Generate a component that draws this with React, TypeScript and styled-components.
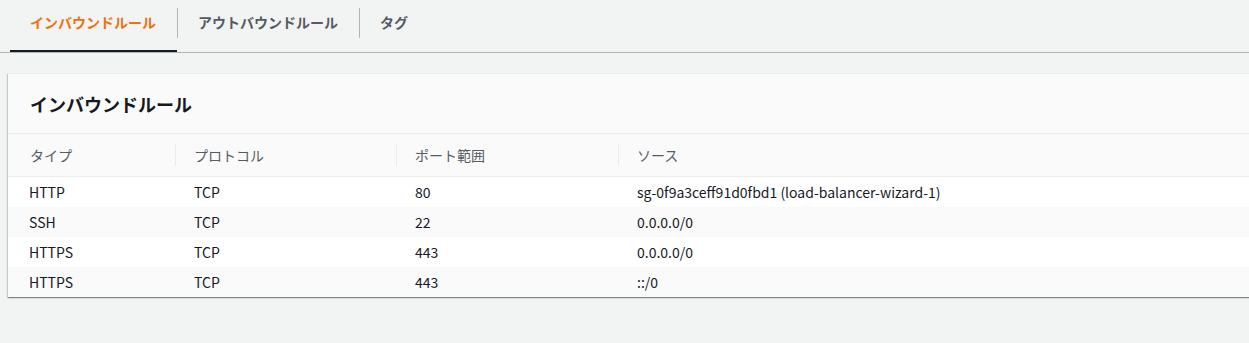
import styled, { createGlobalStyle } from "styled-components";

const GlobalStyle = createGlobalStyle`
  html, body {
    margin: 0;
    padding: 0;
    background: #f2f3f3;
    font-family: "Noto Sans CJK JP", "Noto Sans", sans-serif;
    color: #16191f;
    overflow: hidden;
  }
`;

interface IRule {
  type: string;
  protocol: string;
  port: string;
  source: string;
}

const rules: IRule[] = [
  {
    type: "HTTP",
    protocol: "TCP",
    port: "80",
    source: "sg-0f9a3ceff91d0fbd1 (load-balancer-wizard-1)",
  },
  { type: "SSH", protocol: "TCP", port: "22", source: "0.0.0.0/0" },
  { type: "HTTPS", protocol: "TCP", port: "443", source: "0.0.0.0/0" },
  { type: "HTTPS", protocol: "TCP", port: "443", source: "::/0" },
];

const tabs = ["インバウンドルール", "アウトバウンドルール", "タグ"];
const columns = ["タイプ", "プロトコル", "ポート範囲", "ソース"];

function App() {
  return (
    <Page>
      <GlobalStyle />
      <TabBar>
        {tabs.map((tab, i) => (
          <Tab key={tab} $active={i === 0} $divider={i > 0}>
            <TabLabel $active={i === 0}>{tab}</TabLabel>
          </Tab>
        ))}
      </TabBar>
      <Panel>
        <PanelHeader>
          <Title>インバウンドルール</Title>
        </PanelHeader>
        <Table>
          <colgroup>
            <col style={{ width: 167 }} />
            <col style={{ width: 221 }} />
            <col style={{ width: 222 }} />
            <col />
          </colgroup>
          <thead>
            <tr>
              {columns.map((c, i) => (
                <Th key={c}>
                  <HeadLabel $divider={i > 0}>{c}</HeadLabel>
                </Th>
              ))}
            </tr>
          </thead>
          <tbody>
            {rules.map((r, i) => (
              <Row key={i} $odd={i % 2 === 1}>
                <Td $first>{r.type}</Td>
                <Td>{r.protocol}</Td>
                <Td>{r.port}</Td>
                <Td>{r.source}</Td>
              </Row>
            ))}
          </tbody>
        </Table>
      </Panel>
    </Page>
  );
}

export default App;

const Page = styled.div`
  width: 1249px;
  height: 343px;
  overflow: hidden;
`;

const TabBar = styled.div`
  display: flex;
  padding-left: 10px;
  border-bottom: 1px solid #aab7b8;
  height: 52px;
`;

const Tab = styled.div<{ $active: boolean; $divider: boolean }>`
  position: relative;
  display: flex;
  align-items: flex-start;
  padding: 0 21px 0 ${(p) => (p.$divider ? "21px" : "20px")};
  height: 52px;
  box-sizing: border-box;
  border-bottom: 2px solid ${(p) => (p.$active ? "#16191f" : "transparent")};

  &::before {
    content: "";
    display: ${(p) => (p.$divider ? "block" : "none")};
    position: absolute;
    left: 0;
    top: 8px;
    height: 30px;
    width: 1px;
    background: #aab7b8;
  }
`;

const TabLabel = styled.span<{ $active: boolean }>`
  margin-top: 12px;
  font-size: 14px;
  line-height: 20px;
  font-weight: 700;
  color: ${(p) => (p.$active ? "#ec7211" : "#545b64")};
`;

const Panel = styled.div`
  margin: 20px -20px 0 8px;
  background: #fff;
  border-top: 1px solid #eaeded;
  box-shadow: 0 1px 1px 0 rgba(0, 28, 36, 0.3),
    1px 1px 1px 0 rgba(0, 28, 36, 0.15), -1px 1px 1px 0 rgba(0, 28, 36, 0.15);
`;

const PanelHeader = styled.div`
  display: flex;
  align-items: center;
  height: 59px;
  padding-left: 22px;
  background: #fafafa;
  border-bottom: 1px solid #eaeded;
`;

const Title = styled.h2`
  margin: 0;
  font-size: 18px;
  line-height: 24px;
  font-weight: 700;
  color: #16191f;
`;

const Table = styled.table`
  width: 100%;
  border-collapse: collapse;
  table-layout: fixed;
  font-size: 14px;
`;

const Th = styled.th`
  height: 42px;
  padding: 0;
  text-align: left;
  font-weight: 400;
  color: #545b64;
  background: #fafafa;
  border-bottom: 1px solid #eaeded;
`;

const HeadLabel = styled.div<{ $divider: boolean }>`
  display: flex;
  align-items: center;
  height: 22px;
  padding-left: ${(p) => (p.$divider ? "18px" : "21px")};
  border-left: 1px solid ${(p) => (p.$divider ? "#eaeded" : "transparent")};
  white-space: nowrap;
`;

const Row = styled.tr<{ $odd: boolean }>`
  background: ${(p) => (p.$odd ? "#fafafa" : "#fff")};

  & + & td {
    border-top: 1px solid #eaeded;
  }
`;

const Td = styled.td<{ $first?: boolean }>`
  height: 30px;
  padding: 0 0 0 ${(p) => (p.$first ? "21px" : "19px")};
  color: #16191f;
  white-space: nowrap;
`;
